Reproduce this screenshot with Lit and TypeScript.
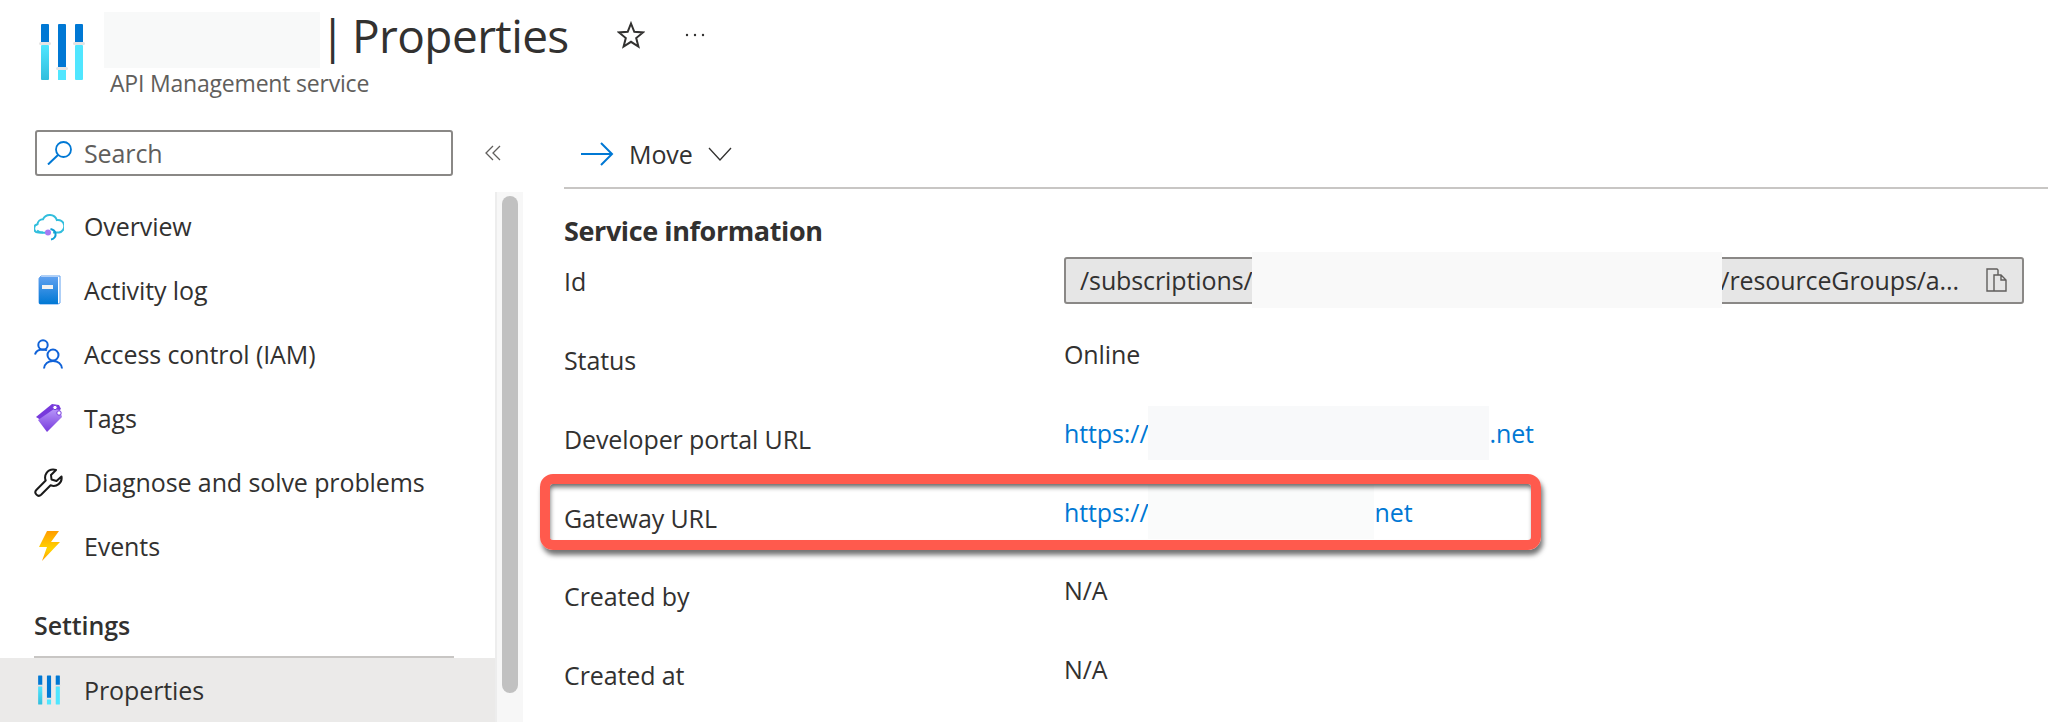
import { LitElement, html, svg, css } from 'lit';
import { customElement } from 'lit/decorators.js';

// sliders logo, used big in the header and small in the menu
const sliders = (w: number, h: number) => html`
  <svg width=${w} height=${h} viewBox="0 0 46 58">
    <defs>
      <linearGradient id="lg" x1="0" y1="0" x2="0" y2="1">
        <stop offset="0" stop-color="#50e6ff"></stop>
        <stop offset="1" stop-color="#32bedd"></stop>
      </linearGradient>
    </defs>
    <rect x="2" y="1" width="8" height="21" rx="1" fill="#0078d4"></rect>
    <rect x="2" y="22" width="8" height="35" rx="1" fill="url(#lg)"></rect>
    <rect x="19" y="1" width="8" height="44" rx="1" fill="#0078d4"></rect>
    <rect x="19" y="47" width="8" height="10" fill="#50e6ff"></rect>
    <rect x="36" y="1" width="8" height="21" rx="1" fill="#0078d4"></rect>
    <rect x="36" y="22" width="8" height="35" rx="1" fill="#50e6ff"></rect>
    <rect x="0" y="19" width="12" height="3" rx="1.5" fill="#e4e4e4"></rect>
    <rect x="17" y="44" width="12" height="3" rx="1.5" fill="#e4e4e4"></rect>
    <rect x="34" y="19" width="12" height="3" rx="1.5" fill="#e4e4e4"></rect>
  </svg>
`;

const icon = (body: unknown) => html`<svg class="nav-icon" width="30" height="30" viewBox="0 0 30 30">${body}</svg>`;

const overviewIcon = icon(svg`
  <path d="M9 21.500H4.500A4.200 4.200 0 0 1 3.500 13.200 5.500 5.500 0 0 1 9 8.200 7.500 7.500 0 0 1 22.800 9a6.300 6.300 0 0 1 2.200 12.500H19" fill="none" stroke="#32bedd" stroke-width="2"/>
  <path d="M3 19.500c2 2 6 2.500 9.500 2" fill="none" stroke="#32bedd" stroke-width="2"/>
  <path d="M17 28.500c3.500-.5 5-3.500 4.500-6-.5-2.500-2.500-4-5-4.500" fill="none" stroke="#0f9ed5" stroke-width="2"/>
  <circle cx="14" cy="21.500" r="3" fill="#a67af4"/>
`);

const activityIcon = icon(svg`
  <defs><linearGradient id="bk" x1="0" y1="0" x2="0" y2="1"><stop offset="0" stop-color="#5ea0ef"/><stop offset="1" stop-color="#0078d4"/></linearGradient></defs>
  <path d="M5 3.500 7 1h19v27l-2 1H6a1.500 1.500 0 0 1-1-1.500z" fill="#fff" stroke="#5ea0ef" stroke-width="1"/>
  <path d="M5 3.500C5 2.500 6 2 7 2h17v27H6a1 1 0 0 1-1-1z" fill="url(#bk)"/>
  <rect x="8" y="10" width="11" height="4" fill="#f2f2f2"/>
`);

const accessIcon = icon(svg`
  <g fill="none" stroke="#0f62d8" stroke-width="2">
    <circle cx="9" cy="6" r="4.700"/>
    <path d="M1 15.500c.8-3.500 3.500-5 8-5 1.500 0 3 .3 4 1"/>
    <circle cx="19" cy="16" r="5.500"/>
    <path d="M10 29.500c.5-4.500 4-7.500 9-7.500s8.500 3 9 7.500"/>
  </g>
`);

const tagsIcon = icon(svg`
  <defs><linearGradient id="tg" x1="0" y1="0" x2="0" y2="1"><stop offset="0" stop-color="#b796f9"/><stop offset="1" stop-color="#773adc"/></linearGradient></defs>
  <path d="M2 14 18 1l7 1 2 4-17 13z" fill="#773adc"/>
  <path d="M5 17 21 6l6 1 2 7L14 29z" transform="translate(-1 0)" fill="url(#tg)"/>
  <circle cx="21" cy="4.500" r="2.200" fill="#fff" stroke="#773adc"/>
  <circle cx="25" cy="10" r="2.200" fill="#fff" stroke="#773adc"/>
`);

const wrenchIcon = icon(svg`
  <path d="M19 2.500a8 8 0 0 0-7.300 11L2.300 23a3.400 3.400 0 0 0 4.800 4.800l9.500-9.500A8 8 0 0 0 27.500 9.500l-5 4.500-5-1.500-.5-4.500 5-5a8 8 0 0 0-3-.5z" fill="none" stroke="#1a1a1a" stroke-width="2" stroke-linejoin="round"/>
`);

const eventsIcon = icon(svg`
  <defs><linearGradient id="ev" x1="0" y1="0" x2="0" y2="1"><stop offset="0" stop-color="#ff9c00"/><stop offset=".6" stop-color="#ffd400"/><stop offset="1" stop-color="#ff9c00"/></linearGradient></defs>
  <path d="M13 0h12l-8 11h9L8 30l5-14H5z" fill="url(#ev)"/>
`);

const menu = [
  { label: 'Overview', icon: overviewIcon },
  { label: 'Activity log', icon: activityIcon },
  { label: 'Access control (IAM)', icon: accessIcon },
  { label: 'Tags', icon: tagsIcon },
  { label: 'Diagnose and solve problems', icon: wrenchIcon },
  { label: 'Events', icon: eventsIcon },
];

@customElement('app-root')
export class AppRoot extends LitElement {
  static styles = css`
    :host {
      display: block;
      position: relative;
      width: 2048px;
      height: 722px;
      overflow: hidden;
      background: #fff;
      color: #323130;
      font-family: 'Open Sans', 'Noto Sans', sans-serif;
      font-size: 25px;
      letter-spacing: -0.1px;
    }
    .header {
      display: flex;
      height: 120px;
    }
    .logo {
      padding: 23px 0 0 39px;
      width: 65px;
    }
    .title-row {
      display: flex;
      align-items: center;
      height: 64px;
      margin-top: 3px;
    }
    .redact-title {
      width: 216px;
      height: 56px;
      background: #f8f9f9;
      margin-top: 10px;
    }
    h1 {
      margin: 0;
      font-size: 46px;
      font-weight: 400;
      letter-spacing: -0.6px;
      word-spacing: -4px;
      line-height: 56px;
      width: 297px;
      white-space: nowrap;
    }
    .star { margin-left: 0; }
    .dots { margin-left: 39px; }
    .subtitle {
      margin: 2px 0 0 6px;
      font-size: 23px;
      line-height: 28px;
      color: #605e5c;
      letter-spacing: -0.2px;
    }
    .body {
      display: grid;
      grid-template-columns: 564px 1fr;
      height: 602px;
    }
    .left {
      position: relative;
      display: flex;
      flex-direction: column;
    }
    .search-row {
      display: flex;
      align-items: center;
      height: 72px;
      padding: 0 0 0 35px;
      flex: none;
    }
    .search {
      display: flex;
      align-items: center;
      box-sizing: border-box;
      width: 418px;
      height: 46px;
      margin-top: 11px;
      margin-bottom: 17px;
      padding-left: 10px;
      gap: 11px;
      border: 2px solid #8a8886;
      border-radius: 3px;
      color: #605e5c;
    }
    .collapse { margin: 0 0 6px 32px; }
    .side {
      display: grid;
      grid-template-columns: 495px 28px;
      height: 530px;
    }
    .nav {
      padding-top: 2px;
    }
    .nav-item {
      display: flex;
      align-items: center;
      height: 64px;
      padding-left: 34px;
      gap: 20px;
      white-space: nowrap;
    }
    .nav-icon { flex: none; }
    .nav-item.active {
      background: #ebeae9;
      padding-left: 37px;
      gap: 23px;
    }
    .nav-item.active .nav-icon { display: flex; }
    .group {
      display: flex;
      align-items: center;
      box-sizing: border-box;
      height: 80px;
      margin: 0 41px 0 34px;
      font-weight: 600;
      border-bottom: 2px solid #c8c6c4;
      padding-top: 15px;
    }
    .track {
      background: #f7f7f7;
      border-left: 2px solid #ededed;
      padding: 4px 5px 0 5px;
    }
    .thumb {
      width: 16px;
      height: 497px;
      border-radius: 8px;
      background: #c1c1c1;
    }
    .toolbar {
      display: flex;
      align-items: center;
      height: 67px;
      gap: 15px;
      padding-left: 16px;
      border-bottom: 2px solid #c8c6c4;
    }
    h2 {
      margin: 0;
      padding-top: 24px;
      font-size: 27px;
      line-height: 36px;
      font-weight: 700;
      letter-spacing: -0.4px;
    }
    .row {
      display: flex;
      height: 78.75px;
    }
    .row.first {
      height: 86px;
      padding-top: 8px;
      box-sizing: border-box;
      align-items: flex-start;
    }
    .label {
      width: 500px;
      flex: none;
      padding-top: 7px;
      line-height: 36px;
    }
    .first .label { padding-top: 6px; }
    .value {
      display: flex;
      align-items: flex-start;
      padding-top: 1px;
      line-height: 36px;
      white-space: nowrap;
    }
    a {
      color: #0078d4;
      text-decoration: none;
    }
    .redact {
      height: 54px;
      margin-top: -9px;
      flex: none;
    }
    .redact.portal { width: 341px; background: #f8f9fa; }
    .redact.gateway { width: 226px; background: #fafbfb; }
    .copybox {
      position: relative;
      display: flex;
      align-items: center;
      justify-content: space-between;
      box-sizing: border-box;
      width: 960px;
      height: 47px;
      padding: 0 14px 2px 14px;
      background: #e6e6e6;
      border: 2px solid #8a8886;
      border-radius: 3px;
    }
    .copy-tail {
      margin-left: auto;
      margin-right: 27px;
    }
    .redact-id {
      position: absolute;
      left: 186px;
      top: -7px;
      width: 470px;
      height: 56px;
      background: #f9f9f9;
    }
    .highlight {
      position: absolute;
      left: 540px;
      top: 474px;
      box-sizing: border-box;
      width: 1001px;
      height: 76px;
      border: 10px solid #ff5a4d;
      border-radius: 13px;
      box-shadow: 2px 5px 5px rgba(0, 0, 0, 0.55), inset 1px 4px 5px -1px rgba(0, 0, 0, 0.6);
    }
  `;

  render() {
    return html`
      <div class="header">
        <div class="logo">${sliders(46, 58)}</div>
        <div>
          <div class="title-row">
            <div class="redact-title"></div>
            <h1>| Properties</h1>
            <svg class="star" width="28" height="28" viewBox="0 0 28 28">
              <path d="M14 2.500l3.300 8.300 8.700.6-6.800 5.600 2.200 8.500L14 20.800l-7.400 4.700 2.200-8.500L2 11.400l8.700-.6z" fill="none" stroke="#323130" stroke-width="2" stroke-linejoin="miter"></path>
            </svg>
            <svg class="dots" width="22" height="6" viewBox="0 0 22 6">
              <circle cx="3" cy="3" r="1.200" fill="#323130"></circle>
              <circle cx="11" cy="3" r="1.200" fill="#323130"></circle>
              <circle cx="19" cy="3" r="1.200" fill="#323130"></circle>
            </svg>
          </div>
          <p class="subtitle">API Management service</p>
        </div>
      </div>
      <div class="body">
        <div class="left">
          <div class="search-row">
            <div class="search">
              <svg width="26" height="24" viewBox="0 0 26 24">
                <circle cx="16.500" cy="8.500" r="7.500" fill="none" stroke="#0078d4" stroke-width="1.800"></circle>
                <path d="M11 14 1 23.500" stroke="#0078d4" stroke-width="2" fill="none"></path>
              </svg>
              Search
            </div>
            <svg class="collapse" width="16" height="16" viewBox="0 0 16 16">
              <path d="M8 1 1 8l7 7M15 1 8 8l7 7" fill="none" stroke="#605e5c" stroke-width="1.300"></path>
            </svg>
          </div>
          <div class="side">
            <div class="nav">
              ${menu.map(m => html`<div class="nav-item">${m.icon}<span>${m.label}</span></div>`)}
              <div class="group">Settings</div>
              <div class="nav-item active">
                <span class="nav-icon">${sliders(24, 30)}</span>
                <span>Properties</span>
              </div>
            </div>
            <div class="track"><div class="thumb"></div></div>
          </div>
        </div>
        <div class="content">
          <div class="toolbar">
            <svg width="34" height="24" viewBox="0 0 34 24">
              <path d="M1 12h31M21 1l11 11-11 11" fill="none" stroke="#0078d4" stroke-width="2"></path>
            </svg>
            <span>Move</span>
            <svg width="24" height="14" viewBox="0 0 24 14">
              <path d="M1 1l11 12L23 1" fill="none" stroke="#323130" stroke-width="1.300"></path>
            </svg>
          </div>
          <h2>Service information</h2>
          <div class="row first">
            <div class="label">Id</div>
            <div class="copybox">
              <span>/subscriptions/</span>
              <span class="redact-id"></span>
              <span class="copy-tail">4/resourceGroups/a...</span>
              <svg width="22" height="24" viewBox="0 0 22 24">
                <path d="M1 1h10l1 1v5h-4v16H1z M8 7h7l5 5v11H8z M15 7v5h5" fill="#e6e6e6" stroke="#605e5c" stroke-width="1.400"></path>
              </svg>
            </div>
          </div>
          <div class="row"><div class="label">Status</div><div class="value">Online</div></div>
          <div class="row">
            <div class="label">Developer portal URL</div>
            <div class="value"><a>https://</a><div class="redact portal"></div><a>.net</a></div>
          </div>
          <div class="row">
            <div class="label">Gateway URL</div>
            <div class="value"><a>https://</a><div class="redact gateway"></div><a>net</a></div>
          </div>
          <div class="row"><div class="label">Created by</div><div class="value">N/A</div></div>
          <div class="row"><div class="label">Created at</div><div class="value">N/A</div></div>
        </div>
      </div>
      <div class="highlight"></div>
    `;
  }
}
